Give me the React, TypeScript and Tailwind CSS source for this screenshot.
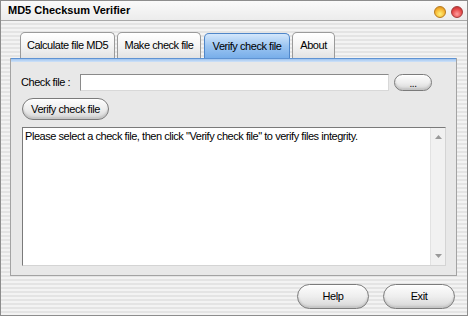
import React from "react";

const stripes =
  "bg-[repeating-linear-gradient(180deg,#f3f3f3_0px,#f3f3f3_2px,#e4e4e4_2px,#e4e4e4_4px)]";

function PillButton({
  label,
  className,
}: {
  label: string;
  className: string;
}) {
  return (
    <button
      className={`flex items-center justify-center rounded-full border border-[#7b7b7b] bg-linear-to-b from-[#fdfdfd] via-[#eeeeee] to-[#d6d6d6] shadow-[inset_0_1px_0_#ffffff,inset_0_-2px_2px_#c4c4c4] text-black ${className}`}
    >
      {label}
    </button>
  );
}

function Tab({
  label,
  width,
  active,
}: {
  label: string;
  width: string;
  active?: boolean;
}) {
  if (active) {
    return (
      <div
        className={`${width} h-[25px] mt-[1px] flex items-center justify-center rounded-t-[5px] border border-b-0 border-[#4f86c9] bg-linear-to-b from-[#d4e7fb] via-[#9cc5f1] to-[#78aeea] text-black`}
      >
        {label}
      </div>
    );
  }
  return (
    <div
      className={`${width} h-[26px] flex items-center justify-center rounded-t-[5px] border border-b-0 border-[#9a9a9a] bg-linear-to-b from-[#ffffff] via-[#f4f4f4] to-[#e3e3e3] text-black`}
    >
      {label}
    </div>
  );
}

export default function App() {
  return (
    <div className="w-[470px] h-[316px] bg-white font-['Liberation_Sans',Arial,sans-serif] text-[11px] tracking-[-0.45px] text-black">
      <div className={`w-[468px] h-[316px] flex flex-col border border-[#8d8d8d] ${stripes}`}>
        {/* title bar */}
        <div className="h-[20px] shrink-0 flex items-center justify-between pl-[7px] pr-[4px] border-b border-[#a9a9a9] bg-linear-to-b from-[#fafafa] to-[#ececec]">
          <span className="font-bold tracking-normal text-[11px]">MD5 Checksum Verifier</span>
          <div className="flex items-center gap-[5px] pt-[2px]">
            <span className="w-[12px] h-[12px] rounded-full border border-[#b77a1a] bg-[radial-gradient(circle_at_50%_70%,#fff27a_0%,#f7b733_55%,#d1821b_100%)]" />
            <span className="w-[12px] h-[12px] rounded-full border border-[#a33a3a] bg-[radial-gradient(circle_at_50%_70%,#ff9f9f_0%,#e64b4b_55%,#b52727_100%)]" />
          </div>
        </div>

        <div className="flex-1 flex flex-col pl-[9px] pr-[10px]">
          {/* tabs */}
          <div className="mt-[11px] pl-[10px] flex items-end">
            <Tab label="Calculate file MD5" width="w-[95px]" />
            <div className="w-[2px]" />
            <Tab label="Make check file" width="w-[84px]" />
            <div className="w-[3px]" />
            <Tab label="Verify check file" width="w-[86px]" active />
            <div className="w-[2px]" />
            <Tab label="About" width="w-[43px]" />
          </div>

          {/* panel */}
          <div className="h-[218px] flex flex-col border border-t-0 border-[#a3a3a3] bg-[#e8e8e8]">
            <div className="h-[4px] border-t border-[#5f93d3] bg-linear-to-b from-[#9fc4ef] to-[#cfe2f8]" />
            <div className="flex flex-col pl-[10px] pr-[11px]">
              <div className="mt-[12px] flex items-center">
                <span className="w-[59px]">Check file :</span>
                <div className="w-[309px] h-[17px] bg-white border border-t-[#8a8a8a] border-l-[#8a8a8a] border-r-[#d8d8d8] border-b-[#d8d8d8]" />
                <PillButton label="..." className="ml-[5px] w-[38px] h-[17px] text-[10px] leading-none pt-[3px]" />
              </div>
              <PillButton label="Verify check file" className="mt-[7px] ml-[1px] w-[87px] h-[22px]" />
              <div className="mt-[7px] ml-[1px] w-[424px] h-[139px] flex bg-white border border-t-[#7a7a7a] border-l-[#7a7a7a] border-r-[#d4d4d4] border-b-[#d4d4d4]">
                <div className="flex-1 pl-[2px] pt-[2px] leading-[13px]">
                  Please select a check file, then click "Verify check file" to verify files integrity.
                </div>
                <div className="w-[15px] flex flex-col items-center justify-between py-[7px] bg-[#f1f1f1] border-l border-[#e2e2e2]">
                  <svg width="7" height="4" viewBox="0 0 7 4">
                    <path d="M0 4 L3.5 0 L7 4 Z" fill="#9a9a9a" />
                  </svg>
                  <svg width="7" height="4" viewBox="0 0 7 4">
                    <path d="M0 0 L3.5 4 L7 0 Z" fill="#9a9a9a" />
                  </svg>
                </div>
              </div>
            </div>
          </div>

          {/* bottom buttons */}
          <div className="mt-[8px] pr-[2px] flex justify-end gap-[14px]">
            <PillButton label="Help" className="w-[72px] h-[25px]" />
            <PillButton label="Exit" className="w-[72px] h-[25px]" />
          </div>
        </div>
      </div>
    </div>
  );
}
